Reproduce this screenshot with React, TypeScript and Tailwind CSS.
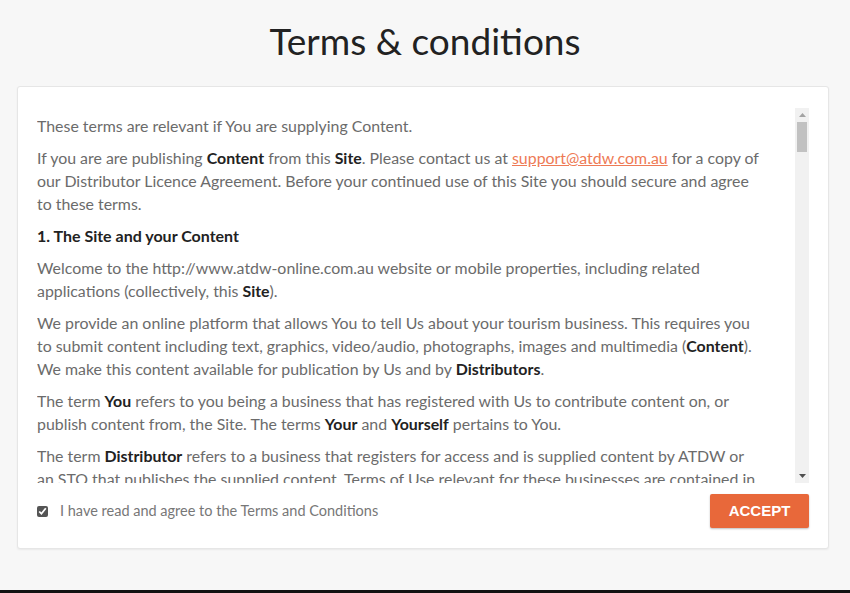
import React, { useState } from 'react';

const TermsText: React.FC = () => (
    <div className="flex flex-col gap-[9px] text-[15.9px] leading-[23px] text-[#6b6b6b]">
        <p>These terms are relevant if You are supplying Content.</p>
        <p>
            If you are are publishing <b className="text-[#222]">Content</b> from this <b className="text-[#222]">Site</b>. Please contact us at{' '}
            <a className="text-[#ee7a55] underline">support@atdw.com.au</a> for a copy of our Distributor Licence Agreement. Before your
            continued use of this Site you should secure and agree to these terms.
        </p>
        <h3 className="font-bold text-[16px] text-[#222]">1. The Site and your Content</h3>
        <p>
            Welcome to the http://www.atdw-online.com.au website or mobile properties, including related applications (collectively, this{' '}
            <b className="text-[#222]">Site</b>).
        </p>
        <p>
            We provide an online platform that allows You to tell Us about your tourism business. This requires you to submit content
            including text, graphics, video/audio, photographs, images and multimedia (<b className="text-[#222]">Content</b>). We make this
            content available for publication by Us and by <b className="text-[#222]">Distributors</b>.
        </p>
        <p>
            The term <b className="text-[#222]">You</b> refers to you being a business that has registered with Us to contribute content on, or
            publish content from, the Site. The terms <b className="text-[#222]">Your</b> and <b className="text-[#222]">Yourself</b> pertains to You.
        </p>
        <p>
            The term <b className="text-[#222]">Distributor</b> refers to a business that registers for access and is supplied content by ATDW or
            an STO that publishes the supplied content. Terms of Use relevant for these businesses are contained in the Distributor Licence
            Agreement.
        </p>
    </div>
);

export default function App() {
    const [agreed, setAgreed] = useState(true);

    return (
        <div className="h-[593px] flex flex-col bg-[#f7f7f7] font-['Lato',sans-serif]">
            <div className="flex-1 flex flex-col">
                {/* tiêu đề */}
                <h1 className="text-center text-[37px] leading-[44px] text-[#222] pt-[19px] h-[86px]">Terms &amp; conditions</h1>

                {/* khung nội dung */}
                <div className="ml-[17px] mr-[21px] bg-white border border-[#e6e6e6] rounded-[3px] shadow-[0_1px_2px_rgba(0,0,0,0.06)] px-[19px] pt-[21px] pb-[20px]">
                    <div className="flex h-[375px]">
                        <div className="flex-1 overflow-hidden pr-[36px] pt-[6px]">
                            <TermsText />
                        </div>
                        {/* thanh cuộn giả */}
                        <div className="w-[14px] flex flex-col bg-[#f1f1f1]">
                            <div className="h-[14px] flex items-center justify-center">
                                <svg width="7" height="4" viewBox="0 0 7 4"><path d="M3.5 0L7 4H0z" fill="#a3a3a3" /></svg>
                            </div>
                            <div className="mx-[2px] h-[30px] bg-[#c1c1c1]" />
                            <div className="flex-1" />
                            <div className="h-[14px] flex items-center justify-center">
                                <svg width="7" height="4" viewBox="0 0 7 4"><path d="M0 0H7L3.5 4z" fill="#505050" /></svg>
                            </div>
                        </div>
                    </div>

                    <div className="flex items-center justify-between mt-[11px]">
                        <label className="flex items-center gap-[12px] text-[14.5px] text-[#777] cursor-pointer">
                            <input
                                type="checkbox"
                                checked={agreed}
                                onChange={(e) => setAgreed(e.target.checked)}
                                className="w-[11px] h-[11px] accent-[#555]"
                            />
                            I have read and agree to the Terms and Conditions
                        </label>
                        <button className="w-[99px] h-[34px] rounded-[2px] bg-[#e8683a] text-white font-bold text-[15px] font-['Liberation_Sans',sans-serif] shadow-[0_1px_2px_rgba(0,0,0,0.25)]">
                            ACCEPT
                        </button>
                    </div>
                </div>
            </div>
            <div className="h-[3px] bg-[#111]" />
        </div>
    );
}
